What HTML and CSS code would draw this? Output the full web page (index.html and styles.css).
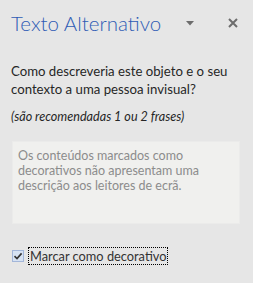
FILE: index.html
```html
<!DOCTYPE html>
<html lang="pt">

<head>
    <meta charset="UTF-8">
    <meta name="viewport" content="width=device-width, initial-scale=1.0">
    <title>Texto Alternativo</title>
    <link rel="stylesheet" href="styles.css">
</head>

<body>
    <div class="pane">
        <header class="pane-head">
            <h1 class="title">Texto Alternativo</h1>
            <div class="icon menu-btn">
                <svg width="8" height="5" viewBox="0 0 8 5"><path d="M0 0H8L4 4.5Z" fill="#6d6d6d"/></svg>
            </div>
            <div class="icon close-btn">
                <svg width="10" height="10" viewBox="0 0 10 10"><path d="M1 1L9 9M9 1L1 9" stroke="#6d6d6d" stroke-width="2"/></svg>
            </div>
        </header>

        <p class="question">Como descreveria este objeto e o seu contexto a uma pessoa invisual?</p>
        <p class="hint">(são recomendadas 1 ou 2 frases)</p>

        <div class="textbox">Os conteúdos marcados como decorativos não apresentam uma descrição aos leitores de ecrã.</div>

        <label class="check-row">
            <span class="checkbox">
                <svg width="10" height="10" viewBox="0 0 10 10"><path d="M1.5 5.2L4 7.6L8.6 2.4" fill="none" stroke="#333" stroke-width="1.6"/></svg>
            </span>
            <span class="check-label">Marcar como decorativo</span>
        </label>
    </div>
</body>

</html>
```

FILE: styles.css
```css
* {
    box-sizing: border-box;
}

body {
    margin: 0;
    padding: 0;
    background-color: #e6e6e6;
    font-family: Lato, "Open Sans", sans-serif;
    color: #262626;
}

.pane {
    padding: 0 12px 0 11px;
}

.pane-head {
    display: flex;
    align-items: center;
    height: 44px;
    padding-top: 1px;
}

.title {
    margin: 0;
    flex: 1;
    font-size: 20.5px;
    font-weight: 300;
    color: #2f5cb5;
}

.icon {
    display: flex;
    align-items: center;
    justify-content: center;
}

.menu-btn {
    width: 8px;
    margin-right: 34px;
    margin-top: 1px;
}

.close-btn {
    width: 10px;
    margin-right: 3px;
}

.question {
    margin: 18px 0 0 0;
    font-size: 13.2px;
    line-height: 18px;
    width: 226px;
}

.hint {
    margin: 10px 0 0 0;
    font-size: 12.6px;
    font-style: italic;
    line-height: 18px;
}

.textbox {
    margin-top: 15px;
    margin-left: 1px;
    width: 228px;
    height: 83px;
    background-color: #f0f0ee;
    border: 1px solid #ebebea;
    padding: 6px 5px;
    font-size: 12.5px;
    line-height: 15px;
    color: #8c8c8c;
}

.check-row {
    display: flex;
    align-items: center;
    margin-top: 23px;
    margin-left: 1px;
}

.checkbox {
    width: 12px;
    height: 12px;
    border: 1px solid #a3b6d9;
    background-color: #d6e2f3;
    display: flex;
    align-items: center;
    justify-content: center;
}

.check-label {
    margin-left: 4px;
    padding: 0 1px;
    border: 1px dotted #000;
    font-size: 12.8px;
    line-height: 16px;
    color: #333;
}
```
